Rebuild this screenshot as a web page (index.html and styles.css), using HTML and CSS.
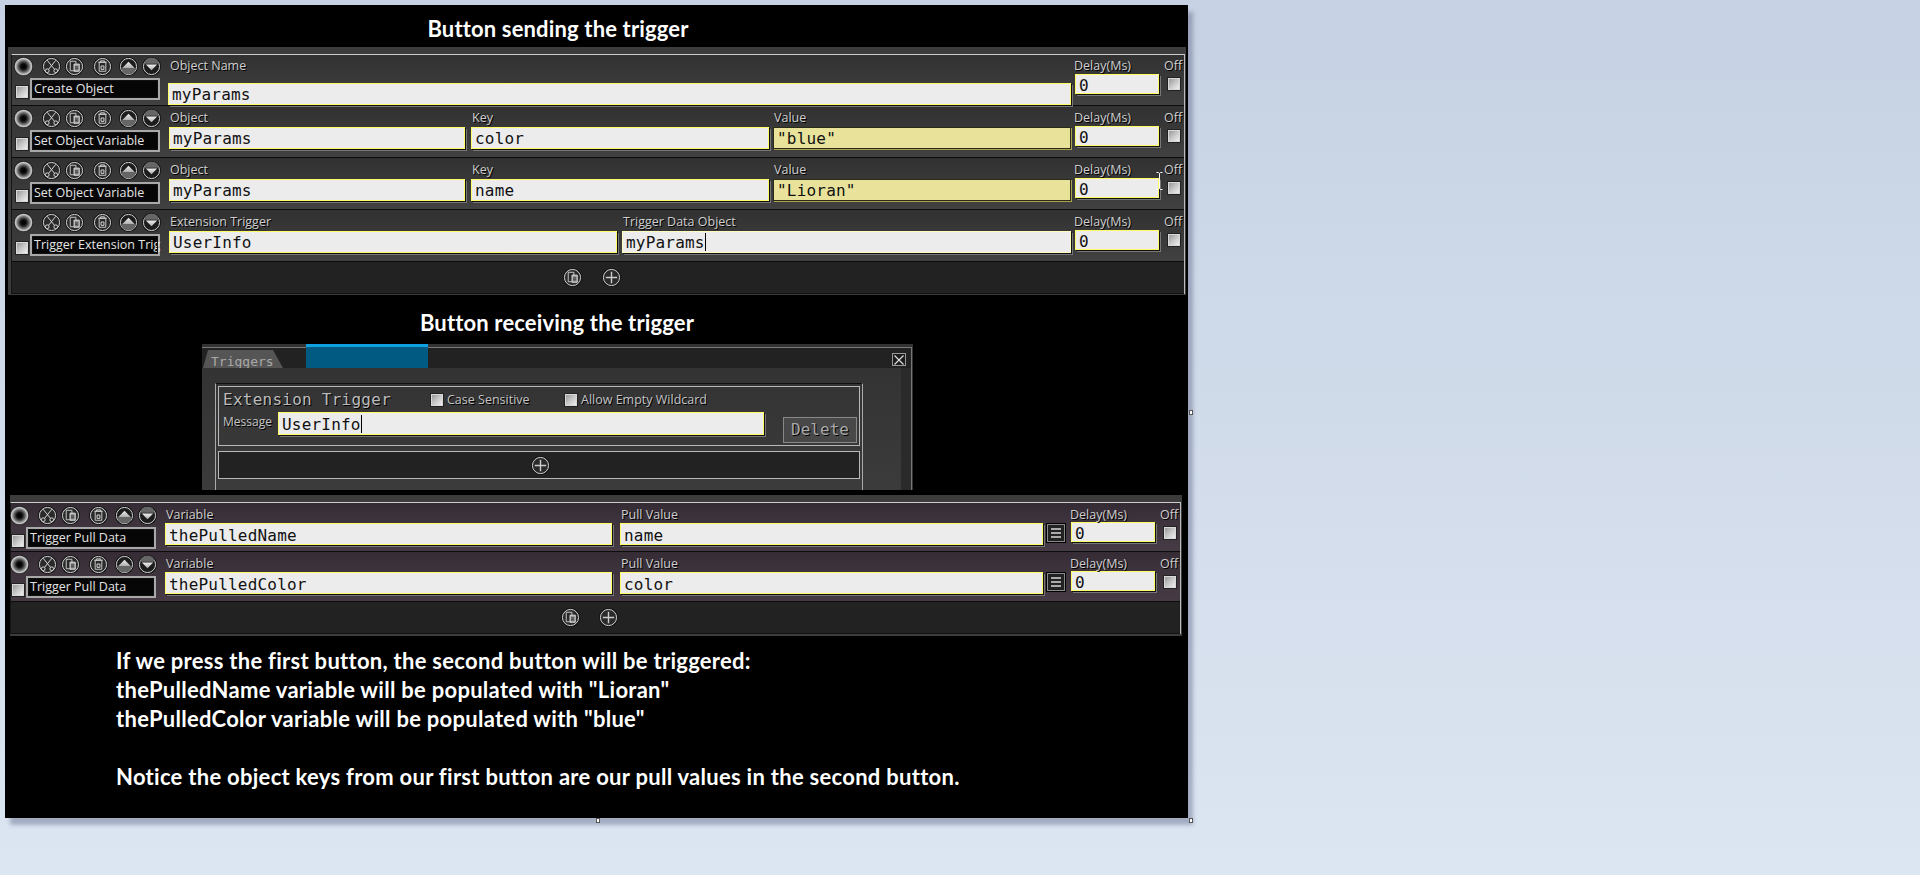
FILE: index.html
```html
<!DOCTYPE html>
<html lang="en">
<head>
    <meta charset="UTF-8">
    <title>Extension trigger</title>
    <link rel="stylesheet" href="styles.css">
</head>
<body>
    <svg class="sprites" width="0" height="0">
        <defs>
            <radialGradient id="recGrad" cx="50%" cy="50%" r="50%">
                <stop offset="0" stop-color="#000"/>
                <stop offset="0.3" stop-color="#0c0c0c"/>
                <stop offset="0.62" stop-color="#666"/>
                <stop offset="0.88" stop-color="#c8c8c8"/>
                <stop offset="1" stop-color="#888"/>
            </radialGradient>
            <linearGradient id="upGrad" x1="0" y1="0" x2="0" y2="1">
                <stop offset="0" stop-color="#eee"/>
                <stop offset="1" stop-color="#aaa"/>
            </linearGradient>
            <symbol id="i-rec" viewBox="0 0 20 20">
                <circle cx="10" cy="10" r="10" fill="#0a0a0a"/>
                <circle cx="10" cy="10" r="9.500" fill="url(#recGrad)"/>
            </symbol>
            <symbol id="i-cut" viewBox="0 0 20 20">
                <circle cx="10" cy="10" r="10" fill="#111"/>
                <circle cx="10" cy="10" r="8.5" fill="#2a2a2a" stroke="#ddd"/>
                <path d="M5.500 3.500l8 10M14.500 3.500l-8 10" stroke="#ddd" fill="none"/>
                <circle cx="5.500" cy="14.500" r="2" fill="#2a2a2a" stroke="#ddd"/>
                <circle cx="14.500" cy="14.500" r="2" fill="#2a2a2a" stroke="#ddd"/>
            </symbol>
            <symbol id="i-copy" viewBox="0 0 20 20">
                <circle cx="10" cy="10" r="10" fill="#111"/>
                <circle cx="10" cy="10" r="8.500" fill="#2a2a2a" stroke="#ddd"/>
                <path d="M5.500 4.500h6v10h-6z" fill="none" stroke="#ccc"/>
                <path d="M9.500 7.500h5.500v7.500h-5.500z" fill="#999" stroke="#ddd"/>
                <path d="M10.500 10.500h3.500M10.500 12.500h3.500" stroke="#222"/>
            </symbol>
            <symbol id="i-trash" viewBox="0 0 20 20">
                <circle cx="10" cy="10" r="10" fill="#111"/>
                <circle cx="10" cy="10" r="8.500" fill="#2a2a2a" stroke="#ddd"/>
                <path d="M5.500 5.500h9M8 5.500v-1.500h4v1.500" fill="none" stroke="#ccc"/>
                <path d="M6.500 5.500h7v9.500h-7z" fill="none" stroke="#ccc"/>
                <path d="M8.500 9.500h3v3.500h-3z" fill="none" stroke="#ddd"/>
            </symbol>
            <symbol id="i-up" viewBox="0 0 20 20">
                <circle cx="10" cy="10" r="10" fill="#111"/>
                <circle cx="10" cy="10" r="8.500" fill="#1c1c1c" stroke="#ddd"/>
                <path d="M3 12L10 5l7 7z" fill="url(#upGrad)"/>
                <path d="M2.200 12h15.600a8 8 0 0 1-15.600 0z" fill="#666"/>
            </symbol>
            <symbol id="i-down" viewBox="0 0 20 20">
                <circle cx="10" cy="10" r="10" fill="#111"/>
                <circle cx="10" cy="10" r="8.500" fill="#1c1c1c" stroke="#ddd"/>
                <path d="M2.200 7h15.600a8 8 0 0 0-15.600 0z" fill="#666"/>
                <path d="M4 8L10 14l6-6z" fill="url(#upGrad)"/>
            </symbol>
            <symbol id="i-paste" viewBox="0 0 20 20">
                <circle cx="10" cy="10" r="10" fill="#111"/>
                <circle cx="10" cy="10" r="8.500" fill="#2a2a2a" stroke="#ddd"/>
                <path d="M5.500 4.500h6v10h-6z" fill="none" stroke="#ccc"/>
                <path d="M9.500 7.500h5.500v7.500h-5.500z" fill="#999" stroke="#ddd"/>
                <path d="M10.500 10.500h3.500M10.500 12.500h3.500" stroke="#222"/>
            </symbol>
            <symbol id="i-plus" viewBox="0 0 20 20">
                <circle cx="10" cy="10" r="10" fill="#111"/>
                <circle cx="10" cy="10" r="8.500" fill="#2a2a2a" stroke="#ddd"/>
                <path d="M10 4v12M4 10h12" stroke="#ccc" stroke-width="1.500"/>
            </symbol>
        </defs>
    </svg>

    <main class="sheet">
        <h1 class="heading heading-top">Button sending the trigger</h1>

        <section class="panel panel-send">
            <div class="panel-bar"></div>
            <div class="panel-body">
                <div class="row row-first">
                    <div class="tools">
                        <div class="tool-icons">
                            <svg class="ico rec"><use href="#i-rec"/></svg>
                            <svg class="ico cut"><use href="#i-cut"/></svg>
                            <svg class="ico copy"><use href="#i-copy"/></svg>
                            <svg class="ico trash"><use href="#i-trash"/></svg>
                            <svg class="ico up"><use href="#i-up"/></svg>
                            <svg class="ico down"><use href="#i-down"/></svg>
                        </div>
                        <div class="tool-name"><span class="check"></span><div class="name-box">Create Object</div></div>
                    </div>
                    <div class="fields">
                        <div class="field"><div class="label label-tall">Object Name</div><div class="input">myParams</div></div>
                    </div>
                    <div class="field delay"><div class="label">Delay(Ms)</div><div class="input input-short">0</div></div>
                    <div class="off"><div class="label">Off</div><span class="check"></span></div>
                </div>

                <div class="row">
                    <div class="tools">
                        <div class="tool-icons">
                            <svg class="ico rec"><use href="#i-rec"/></svg>
                            <svg class="ico cut"><use href="#i-cut"/></svg>
                            <svg class="ico copy"><use href="#i-copy"/></svg>
                            <svg class="ico trash"><use href="#i-trash"/></svg>
                            <svg class="ico up"><use href="#i-up"/></svg>
                            <svg class="ico down"><use href="#i-down"/></svg>
                        </div>
                        <div class="tool-name"><span class="check"></span><div class="name-box">Set Object Variable</div></div>
                    </div>
                    <div class="fields fields-three">
                        <div class="field"><div class="label">Object</div><div class="input">myParams</div></div>
                        <div class="field"><div class="label">Key</div><div class="input">color</div></div>
                        <div class="field"><div class="label">Value</div><div class="input input-value">"blue"</div></div>
                    </div>
                    <div class="field delay"><div class="label">Delay(Ms)</div><div class="input input-short">0</div></div>
                    <div class="off"><div class="label">Off</div><span class="check"></span></div>
                </div>

                <div class="row">
                    <div class="tools">
                        <div class="tool-icons">
                            <svg class="ico rec"><use href="#i-rec"/></svg>
                            <svg class="ico cut"><use href="#i-cut"/></svg>
                            <svg class="ico copy"><use href="#i-copy"/></svg>
                            <svg class="ico trash"><use href="#i-trash"/></svg>
                            <svg class="ico up"><use href="#i-up"/></svg>
                            <svg class="ico down"><use href="#i-down"/></svg>
                        </div>
                        <div class="tool-name"><span class="check"></span><div class="name-box">Set Object Variable</div></div>
                    </div>
                    <div class="fields fields-three">
                        <div class="field"><div class="label">Object</div><div class="input">myParams</div></div>
                        <div class="field"><div class="label">Key</div><div class="input">name</div></div>
                        <div class="field"><div class="label">Value</div><div class="input input-value">"Lioran"</div></div>
                    </div>
                    <div class="field delay"><div class="label">Delay(Ms)</div><div class="input input-short">0</div></div>
                    <div class="off"><div class="label">Off</div><span class="check"></span></div>
                </div>

                <div class="row">
                    <div class="tools">
                        <div class="tool-icons">
                            <svg class="ico rec"><use href="#i-rec"/></svg>
                            <svg class="ico cut"><use href="#i-cut"/></svg>
                            <svg class="ico copy"><use href="#i-copy"/></svg>
                            <svg class="ico trash"><use href="#i-trash"/></svg>
                            <svg class="ico up"><use href="#i-up"/></svg>
                            <svg class="ico down"><use href="#i-down"/></svg>
                        </div>
                        <div class="tool-name"><span class="check"></span><div class="name-box">Trigger Extension Trig</div></div>
                    </div>
                    <div class="fields fields-two">
                        <div class="field"><div class="label">Extension Trigger</div><div class="input">UserInfo</div></div>
                        <div class="field"><div class="label">Trigger Data Object</div><div class="input input-focus">myParams<span class="caret"></span></div></div>
                    </div>
                    <div class="field delay"><div class="label">Delay(Ms)</div><div class="input input-short">0</div></div>
                    <div class="off"><div class="label">Off</div><span class="check"></span></div>
                </div>

                <div class="panel-foot">
                    <svg class="ico"><use href="#i-paste"/></svg>
                    <svg class="ico"><use href="#i-plus"/></svg>
                </div>
            </div>
        </section>

        <h2 class="heading heading-mid">Button receiving the trigger</h2>

        <section class="win">
            <div class="win-frame">
                <div class="win-tabs">
                    <div class="tab">Triggers</div>
                    <div class="tab-blue"></div>
                    <div class="win-close">
                        <svg width="10" height="10" viewBox="0 0 10 10"><path d="M0.500 0.500l9 9M9.500 0.500l-9 9" stroke="#ddd" stroke-width="1.200"/></svg>
                    </div>
                </div>
                <div class="win-body">
                    <div class="trigger-group">
                        <div class="trigger-box">
                            <div class="trigger-top">
                                <div class="trigger-title">Extension Trigger</div>
                                <label class="opt opt-case"><span class="check"></span>Case Sensitive</label>
                                <label class="opt"><span class="check"></span>Allow Empty Wildcard</label>
                            </div>
                            <div class="trigger-msg">
                                <div class="msg-label">Message</div>
                                <div class="input msg-input">UserInfo<span class="caret"></span></div>
                                <div class="btn-delete">Delete</div>
                            </div>
                        </div>
                        <div class="trigger-foot">
                            <svg class="ico"><use href="#i-plus"/></svg>
                        </div>
                    </div>
                </div>
            </div>
        </section>

        <section class="panel panel-pull">
            <div class="panel-bar"></div>
            <div class="panel-body">
                <div class="row row-pull">
                    <div class="tools">
                        <div class="tool-icons">
                            <svg class="ico rec"><use href="#i-rec"/></svg>
                            <svg class="ico cut"><use href="#i-cut"/></svg>
                            <svg class="ico copy"><use href="#i-copy"/></svg>
                            <svg class="ico trash"><use href="#i-trash"/></svg>
                            <svg class="ico up"><use href="#i-up"/></svg>
                            <svg class="ico down"><use href="#i-down"/></svg>
                        </div>
                        <div class="tool-name"><span class="check"></span><div class="name-box">Trigger Pull Data</div></div>
                    </div>
                    <div class="fields fields-pull">
                        <div class="field"><div class="label">Variable</div><div class="input">thePulledName</div></div>
                        <div class="field"><div class="label">Pull Value</div><div class="input">name</div></div>
                        <div class="menu-btn"><i></i><i></i><i></i></div>
                    </div>
                    <div class="field delay"><div class="label">Delay(Ms)</div><div class="input input-short">0</div></div>
                    <div class="off"><div class="label">Off</div><span class="check"></span></div>
                </div>

                <div class="row row-pull">
                    <div class="tools">
                        <div class="tool-icons">
                            <svg class="ico rec"><use href="#i-rec"/></svg>
                            <svg class="ico cut"><use href="#i-cut"/></svg>
                            <svg class="ico copy"><use href="#i-copy"/></svg>
                            <svg class="ico trash"><use href="#i-trash"/></svg>
                            <svg class="ico up"><use href="#i-up"/></svg>
                            <svg class="ico down"><use href="#i-down"/></svg>
                        </div>
                        <div class="tool-name"><span class="check"></span><div class="name-box">Trigger Pull Data</div></div>
                    </div>
                    <div class="fields fields-pull">
                        <div class="field"><div class="label">Variable</div><div class="input">thePulledColor</div></div>
                        <div class="field"><div class="label">Pull Value</div><div class="input">color</div></div>
                        <div class="menu-btn"><i></i><i></i><i></i></div>
                    </div>
                    <div class="field delay"><div class="label">Delay(Ms)</div><div class="input input-short">0</div></div>
                    <div class="off"><div class="label">Off</div><span class="check"></span></div>
                </div>

                <div class="panel-foot">
                    <svg class="ico"><use href="#i-paste"/></svg>
                    <svg class="ico"><use href="#i-plus"/></svg>
                </div>
            </div>
        </section>

        <div class="notes">
            <p>If we press the first button, the second button will be triggered:</p>
            <p>thePulledName variable will be populated with "Lioran"</p>
            <p>thePulledColor variable will be populated with "blue"</p>
            <p class="note-gap">Notice the object keys from our first button are our pull values in the second button.</p>
        </div>
    </main>

    <!-- selection handles and mouse cursor sit over the picture -->
    <span class="handle handle-right"></span>
    <span class="handle handle-bottom"></span>
    <span class="handle handle-corner"></span>
    <svg class="ibeam" width="7" height="18" viewBox="0 0 7 18">
        <path d="M0.500 0.500h2l1 1 1-1h2M3.500 1.500v15M0.500 17.500h2l1-1 1 1h2" fill="none" stroke="#fff" stroke-width="1"/>
    </svg>
</body>
</html>
```

FILE: styles.css
```css
html, body {
    margin: 0;
    height: 875px;
    overflow: hidden;
}
body {
    position: relative;
    background: linear-gradient(180deg, #c6d1e3 0%, #dce6f2 100%);
    font-family: "Open Sans", sans-serif;
}
.sprites {
    display: block;
    height: 0;
}

/* black sheet */
.sheet {
    box-sizing: border-box;
    width: 1183px;
    height: 813px;
    margin: 5px 0 0 5px;
    background: #000;
    box-shadow: 5px 7px 4px rgba(95, 105, 135, 0.45);
    overflow: hidden;
}
.heading {
    margin: 0;
    color: #fff;
    font-family: Lato, sans-serif;
    font-weight: 700;
    font-size: 22px;
    letter-spacing: 0.15px;
    text-align: center;
}
.heading-top {
    height: 42px;
    line-height: 48px;
    width: 1106px;
}
.heading-mid {
    height: 49px;
    line-height: 56px;
    width: 1104px;
}

/* row panels */
.panel {
    background: #3c3c3c;
}
.panel-send {
    width: 1178px;
    margin-left: 3px;
    height: 248px;
}
.panel-pull {
    width: 1172px;
    margin: 5px 0 0 5px;
    height: 141px;
}
.panel-bar {
    height: 7px;
}
.panel-body {
    margin: 0 1px 0 3px;
    border-top: 1px solid #ccc;
    border-left: 1px solid #151515;
    border-right: 1px solid #bbb;
    background: #222;
}
.panel-pull .panel-body {
    margin-left: 0;
}
.panel-foot {
    height: 31px;
    display: flex;
    align-items: center;
    justify-content: center;
    gap: 20px;
    padding-right: 12px;
    background: #222;
    border-bottom: 1px solid #111;
}
.panel-pull .panel-foot {
    gap: 19px;
}

.row {
    box-sizing: border-box;
    display: grid;
    grid-template-columns: 156px 907px 89px 1fr;
    height: 52px;
    padding-top: 2px;
    border-bottom: 1px solid #0c0c0c;
    background: linear-gradient(180deg, #313131 0%, #363636 30%, #414141 100%);
}
.row-first {
    height: 51px;
    padding-top: 1px;
}
.row-pull {
    height: 49px;
    padding-top: 1px;
    grid-template-columns: 154px 906px 88px 1fr;
    background: linear-gradient(180deg, #352b34 0%, #3c323b 30%, #463b45 100%);
}
.row-pull + .row-pull {
    height: 50px;
}

/* left tool column */
.tool-icons {
    display: flex;
    align-items: center;
    height: 20px;
    padding-left: 2px;
}
.row-pull .tool-icons {
    padding-left: 0;
    margin-top: 1px;
    margin-left: -1px;
}
.ico {
    display: block;
    width: 19px;
    height: 19px;
    flex: none;
}
.ico.cut {
    margin-left: 9px;
}
.ico.copy {
    margin-left: 4px;
}
.ico.trash {
    margin-left: 9px;
}
.ico.up {
    margin-left: 7px;
}
.ico.down {
    margin-left: 4px;
}
.tool-name {
    display: flex;
    align-items: flex-end;
    padding-left: 4px;
    margin-top: 2px;
}
.row-pull .tool-name {
    padding-left: 1px;
}
.check {
    display: block;
    flex: none;
    box-sizing: border-box;
    width: 12px;
    height: 12px;
    border: 1px solid #d8d8d8;
    background: linear-gradient(135deg, #999 0%, #c8c8c8 50%, #eee 100%);
    box-shadow: 0 0 0 1px #222;
}
.tool-name .check {
    margin-bottom: 2px;
}
.name-box {
    box-sizing: border-box;
    width: 130px;
    height: 22px;
    margin-left: 2px;
    padding-left: 2px;
    border: 2px solid #a8a8a8;
    outline: 1px solid #111;
    outline-offset: -3px;
    background: #060606;
    color: #e4e4e4;
    font-size: 12.5px;
    line-height: 17px;
    white-space: nowrap;
}

/* fields */
.fields {
    display: grid;
    grid-template-columns: 1fr;
    padding-right: 4px;
}
.fields-three {
    grid-template-columns: 296px 298px 296px;
    column-gap: 6px;
    padding-right: 2px;
    padding-left: 1px;
}
.fields-three .field:last-child {
    margin-left: -2px;
}
.fields-two {
    grid-template-columns: 448px 449px;
    column-gap: 5px;
    padding-right: 2px;
    padding-left: 1px;
}
.fields-pull {
    grid-template-columns: 447px 423px 18px;
    column-gap: 8px;
    padding-left: 0;
    padding-right: 0;
}
.label {
    height: 19px;
    padding-left: 1px;
    color: #cfcfcf;
    font-size: 12.5px;
    line-height: 19px;
    text-shadow: 1px 1px 0 #000;
    white-space: nowrap;
}
.label-tall {
    height: 27px;
    padding-left: 2px;
}
.row-pull .label {
    line-height: 21px;
}
.delay .label {
    height: 18px;
    padding-left: 0;
    margin-left: -1px;
}
.input {
    box-sizing: border-box;
    height: 22px;
    padding-left: 3px;
    border: 1px solid #ffff66;
    background: #ececec;
    box-shadow: 1px 1px 0 #111, 2px 2px 0 #777;
    color: #111;
    font-family: "DejaVu Sans Mono", monospace;
    font-size: 16px;
    letter-spacing: 0.2px;
    line-height: 21px;
    white-space: pre;
    overflow: hidden;
}
.row-pull .input {
    line-height: 23px;
}
.input-short,
.row-pull .input-short {
    width: 84px;
    height: 20px;
    line-height: 22px;
}
.input-value {
    border-color: #2a2a16;
    background: #e8e29b;
    box-shadow: 1px 1px 0 #a9a34e;
}
.input-focus {
    border-color: #fdfdc0;
}
.caret {
    display: inline-block;
    width: 1px;
    height: 18px;
    vertical-align: -3px;
    background: #000;
}
.off .label {
    height: 22px;
    padding-left: 0;
}
.row-pull .off .label {
    height: 23px;
    padding-left: 1px;
}
.off .check {
    margin-left: 4px;
}
.row-pull .off .check {
    margin-left: 5px;
}
.menu-btn {
    box-sizing: border-box;
    display: flex;
    flex-direction: column;
    justify-content: center;
    gap: 2px;
    width: 18px;
    height: 18px;
    margin: 20px 0 0 -4px;
    padding: 0 3px;
    border: 1px solid #888;
    background: #222;
    box-shadow: 0 0 0 1px #000;
}
.menu-btn i {
    display: block;
    height: 2px;
    background: #aaa;
}

/* triggers window */
.win {
    box-sizing: border-box;
    width: 711px;
    height: 146px;
    margin-left: 197px;
    padding: 3px 1px 0 0;
    background: #333;
    overflow: hidden;
}
.win-frame {
    height: 150px;
    border-top: 1px solid #777;
    border-right: 1px solid #777;
}
.win-tabs {
    display: flex;
    height: 20px;
    background: #222;
}
.tab {
    box-sizing: border-box;
    width: 80px;
    height: 18px;
    margin: 2px 0 0 1px;
    padding-left: 8px;
    background: #555;
    clip-path: polygon(5px 0, 70px 0, 80px 100%, 0 100%);
    color: #aaa;
    font-family: "DejaVu Sans Mono", monospace;
    font-size: 13px;
    line-height: 23px;
}
.tab-blue {
    box-sizing: border-box;
    width: 122px;
    height: 24px;
    margin: -4px 0 0 23px;
    border-top: 3px solid #0ea0e0;
    background: #005a82;
}
.win-close {
    box-sizing: border-box;
    display: flex;
    align-items: center;
    justify-content: center;
    width: 14px;
    height: 13px;
    margin: 5px 0 0 464px;
    border: 1px solid #999;
    background: #1c1c1c;
}
.win-body {
    box-sizing: border-box;
    height: 130px;
    padding: 15px 0 0 13px;
    border-right: 10px solid #2a2a2a;
    background: linear-gradient(180deg, #333 0%, #3c3c3c 100%);
}
.trigger-group {
    box-sizing: border-box;
    width: 648px;
    height: 110px;
    padding: 2px;
    border: 1px solid #aaa;
    border-top-color: #111;
}
.trigger-box {
    box-sizing: border-box;
    height: 60px;
    padding: 0 0 0 4px;
    border: 1px solid #b8b8b8;
}
.trigger-top {
    display: flex;
    align-items: center;
    height: 25px;
}
.trigger-title {
    width: 208px;
    color: #bbb;
    font-family: "DejaVu Sans Mono", monospace;
    font-size: 16px;
    letter-spacing: 0.25px;
    text-shadow: 1px 1px 0 #000;
    white-space: nowrap;
}
.opt {
    display: flex;
    align-items: center;
    gap: 4px;
    color: #c4c4c4;
    font-size: 12.5px;
    text-shadow: 1px 1px 0 #000;
    white-space: nowrap;
}
.opt-case {
    width: 134px;
}
.trigger-msg {
    display: flex;
    align-items: flex-start;
}
.msg-label {
    width: 55px;
    color: #c4c4c4;
    font-size: 12px;
    line-height: 19px;
    text-shadow: 1px 1px 0 #000;
}
.msg-input {
    width: 486px;
    height: 23px;
    line-height: 23px;
}
.btn-delete {
    box-sizing: border-box;
    width: 74px;
    height: 26px;
    margin: 5px 0 0 19px;
    border: 1px solid #888;
    background: #484848;
    color: #aaa;
    font-family: "DejaVu Sans Mono", monospace;
    font-size: 16px;
    line-height: 24px;
    text-align: center;
    text-shadow: 1px 1px 0 #000;
}
.trigger-foot {
    box-sizing: border-box;
    display: flex;
    align-items: center;
    justify-content: center;
    height: 28px;
    margin-top: 5px;
    padding-left: 2px;
    border: 1px solid #b8b8b8;
    background: #222;
}

/* text below */
.notes {
    margin: 10px 0 0 111px;
    color: #fff;
    font-family: Lato, sans-serif;
    font-weight: 700;
    font-size: 22px;
    letter-spacing: 0.28px;
    line-height: 29px;
}
.notes p {
    margin: 0;
}
.notes .note-gap {
    margin-top: 29px;
}

/* overlays */
.handle {
    position: absolute;
    box-sizing: border-box;
    width: 4px;
    height: 5px;
    border: 1px solid #555;
    background: #fff;
}
.handle-right {
    left: 1189px;
    top: 410px;
}
.handle-bottom {
    left: 596px;
    top: 818px;
}
.handle-corner {
    left: 1189px;
    top: 818px;
}
.ibeam {
    position: absolute;
    left: 1156px;
    top: 172px;
}
```
